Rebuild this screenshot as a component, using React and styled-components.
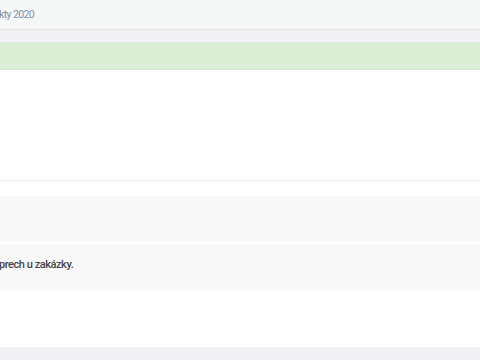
import React from 'react'
import styled, { createGlobalStyle } from 'styled-components'

const Global = createGlobalStyle`
    html, body {
        margin: 0;
        padding: 0;
        background: #f0f0f5;
        font-family: Roboto, "Liberation Sans", sans-serif;
    }
`

const Page = styled.div`
    width: 480px;
    height: 360px;
    overflow: hidden;
    display: flex;
    flex-direction: column;
    background: #f0f0f5;
`

const Breadcrumb = styled.div`
    height: 30px;
    box-sizing: border-box;
    display: flex;
    align-items: center;
    background: #f6f7f7;
    border-bottom: 1px solid #e4e5e8;
    font-size: 10.5px;
    letter-spacing: -0.6px;
    color: #7f91a8;
    padding-bottom: 1px;
`

const Crumb = styled.span`
    margin-left: -1px;
`

const Gap = styled.div`
    height: ${p => p.h}px;
`

const Alert = styled.div`
    height: 27px;
    background: #ddeed7;
    border-bottom: 1px solid #d6e8cf;
`

const Card = styled.div`
    background: #fff;
    display: flex;
    flex-direction: column;
`

const CardBody = styled.div`
    height: 110px;
    border-bottom: 1px solid #ececec;
`

const List = styled.div`
    padding: 15px 0 0;
    display: flex;
    flex-direction: column;
    gap: 3px;
`

const Row = styled.div`
    height: ${p => p.h}px;
    background: #f8f8f8;
    display: flex;
    align-items: center;
    font-size: 11px;
    font-weight: 500;
    letter-spacing: -0.45px;
    color: #454545;
    padding-bottom: 5px;
    box-sizing: border-box;
`

const RowText = styled.span`
    margin-left: -1px;
`

const Footer = styled.div`
    height: 57px;
`

export default function App() {
    return (
        <Page>
            <Global />
            <Breadcrumb>
                <Crumb>kty 2020</Crumb>
            </Breadcrumb>
            <Gap h={12} />
            <Alert />
            <Card>
                <CardBody />
                <List>
                    <Row h={45} />
                    <Row h={46}>
                        <RowText>prech u zakázky.</RowText>
                    </Row>
                </List>
                <Footer />
            </Card>
        </Page>
    )
}
